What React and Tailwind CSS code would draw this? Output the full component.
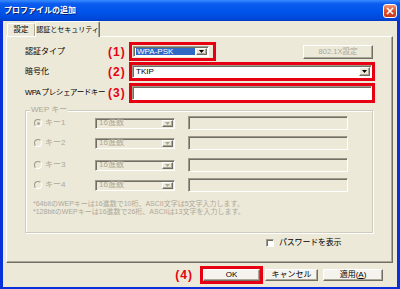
import React from "react";

const sunken =
  "border border-t-[#9D9A8B] border-l-[#9D9A8B] border-b-white border-r-white shadow-[inset_1px_1px_0_#716F64]";
const raised =
  "border border-t-white border-l-white border-b-[#716F64] border-r-[#716F64] shadow-[inset_-1px_-1px_0_#ACA899]";

const Arrow = ({ disabled }) => (
  <div className={`w-[11px] h-full flex items-center justify-center bg-[#ECE9D8] ${raised}`}>
    <svg width="5" height="3" viewBox="0 0 5 3">
      <polygon points="0,0 5,0 2.5,3" fill={disabled ? "#ACA899" : "#000"} />
    </svg>
  </div>
);

const Select = ({ value, className, disabled, highlight }) => (
  <div
    className={`flex items-stretch p-[1px] ${sunken} ${disabled ? "bg-[#ECE9D8]" : "bg-white"} ${className}`}
  >
    <div className="flex-1 flex items-center pl-[1px] pr-[1px]">
      <span
        className={`flex-1 h-full flex items-center pl-[1px] text-[8px] leading-none ${
          highlight ? "bg-[#316AC5] text-white" : disabled ? "text-[#ACA899]" : "text-black"
        }`}
      >
        {value}
      </span>
    </div>
    <Arrow disabled={disabled} />
  </div>
);

const Paren = ({ n }) => (
  <span className="w-[21px] text-[12px] leading-none font-bold tracking-[1px] text-[#E60012]">
    ({n})
  </span>
);

const Radio = ({ checked }) => (
  <div className="w-[8px] h-[8px] rounded-full bg-[#ECE9D8] border border-t-[#9D9A8B] border-l-[#9D9A8B] border-b-white border-r-white flex items-center justify-center">
    {checked && <div className="w-[3px] h-[3px] rounded-full bg-[#ACA899]" />}
  </div>
);

const KeyRow = ({ n, checked, className }) => (
  <div className={`flex items-center h-[14px] pl-[8px] ${className}`}>
    <Radio checked={checked} />
    <span className="ml-[3px] w-[50px] text-[8px] leading-none text-[#ACA899]">キー{n}</span>
    <Select value="16進数" disabled className="w-[80px] h-[11px]" />
    <div className={`ml-[13px] w-[160px] h-[14px] bg-[#ECE9D8] ${sunken}`} />
  </div>
);

export default function App() {
  return (
    <div className="w-[400px] h-[289px] flex flex-col bg-[#0831D9] font-['Liberation_Sans','Noto_Sans_CJK_JP',sans-serif] select-none">
      {/* title bar */}
      <div className="h-[21px] flex items-center pl-[4px] pr-[3px] bg-[linear-gradient(to_bottom,#3A8CFF_0%,#0A5CF0_18%,#0053E8_60%,#0047DA_90%,#003BC5_100%)]">
        <span className="text-[8px] leading-none font-bold text-white [text-shadow:1px_1px_0_#0A1E6E]">
          プロファイルの追加
        </span>
        <div className="ml-auto w-[14px] h-[14px] rounded-[3px] border border-white bg-[linear-gradient(to_bottom,#F09A7A,#E0542E_45%,#C8381A)] flex items-center justify-center">
          <svg width="8" height="8" viewBox="0 0 8 8">
            <path d="M1 1 L7 7 M7 1 L1 7" stroke="#fff" strokeWidth="1.6" />
          </svg>
        </div>
      </div>

      {/* body */}
      <div className="flex-1 mx-[3px] mb-[2px] bg-[#ECE9D8] flex flex-col">
        {/* tabs */}
        <div className="h-[15px] flex items-end pl-[4px]">
          <div className="h-[13px] w-[28px] flex items-center justify-center border-t border-l border-white border-r border-r-[#ACA899] rounded-t-[2px] text-[7.5px] leading-none text-black">
            設定
          </div>
          <div className="relative z-10 -mb-[1px] h-[16px] w-[65px] flex items-center justify-center bg-[#ECE9D8] border-t border-l border-white border-r border-r-[#716F64] rounded-t-[2px] shadow-[inset_-1px_0_0_#ACA899] text-[7px] leading-none text-black">
            認証とセキュリティ
          </div>
        </div>

        {/* panel */}
        <div className="ml-[3px] mr-[4px] h-[227px] flex flex-col pt-[5px] pl-[18px] pr-[17px] border-l border-t border-white border-r border-b border-r-[#716F64] border-b-[#716F64] shadow-[inset_-1px_-1px_0_#ACA899]">
          {/* row 1 */}
          <div className="h-[19px] flex items-center">
            <span className="w-[83px] text-[8px] leading-none text-black">認証タイプ</span>
            <Paren n={1} />
            <div className="w-[87px] h-[19px] border-[3px] border-[#E60012] p-[1px]">
              <Select value="WPA-PSK" highlight className="w-[76px] h-[11px]" />
            </div>
            <div
              className={`ml-auto mr-[2px] w-[70px] h-[14px] flex items-center justify-center text-[7.5px] leading-none text-[#ACA899] ${raised}`}
            >
              802.1X設定
            </div>
          </div>

          {/* row 2 */}
          <div className="mt-[1px] h-[19px] flex items-center">
            <span className="w-[83px] text-[8px] leading-none text-black">暗号化</span>
            <Paren n={2} />
            <div className="flex-1 h-[19px] border-[3px] border-[#E60012]">
              <Select value="TKIP" className="w-full h-[13px]" />
            </div>
          </div>

          {/* row 3 */}
          <div className="mt-[2px] h-[20px] flex items-center">
            <span className="w-[83px] text-[7.5px] leading-none tracking-[-0.4px] text-black whitespace-nowrap">
              WPA プレシェアードキー
            </span>
            <Paren n={3} />
            <div className="flex-1 h-[20px] border-[3px] border-[#E60012] px-[0px]">
              <div className={`w-full h-[14px] bg-white ${sunken}`} />
            </div>
          </div>

          {/* WEP group */}
          <div className="mt-[7px] mr-[2px] h-[123px] flex flex-col border border-[#CFCCBD] shadow-[1px_1px_0_#fff,inset_1px_1px_0_#fff]">
            <span className="self-start -mt-[6px] ml-[4px] px-[1px] bg-[#ECE9D8] text-[8px] leading-[10px] text-[#ACA899]">
              WEP キー
            </span>
            <KeyRow n={1} checked className="mt-[1px]" />
            <KeyRow n={2} className="mt-[6px]" />
            <KeyRow n={3} className="mt-[8px]" />
            <KeyRow n={4} className="mt-[6px]" />
            <div className="mt-[8px] pl-[7px] text-[7px] leading-[8px] text-[#ACA899] whitespace-nowrap">
              <div>*64bitのWEPキーは16進数で10桁、ASCII文字は5文字入力します。</div>
              <div>*128bitのWEPキーは16進数で26桁、ASCIIは13文字を入力します。</div>
            </div>
          </div>

          {/* show password */}
          <div className="mt-[6px] h-[8px] flex items-center ml-[241px]">
            <div className={`w-[8px] h-[8px] bg-white ${sunken}`} />
            <span className="ml-[5px] text-[8px] leading-none tracking-[-0.2px] text-black whitespace-nowrap">
              パスワードを表示
            </span>
          </div>
        </div>

        {/* buttons */}
        <div className="pt-[3px] flex items-center justify-end pr-[14px]">
          <span className="mr-[7px] text-[12px] leading-none font-bold tracking-[1px] text-[#E60012]">
            (4)
          </span>
          <div className="w-[63px] h-[18px] border-[3px] border-[#E60012]">
            <div
              className={`w-full h-full flex items-center justify-center bg-[#F4F3EE] text-[8px] leading-none text-black ${raised}`}
            >
              OK
            </div>
          </div>
          <div
            className={`ml-[2px] w-[53px] h-[12px] flex items-center justify-center bg-[#F4F3EE] text-[8px] leading-none text-black ${raised}`}
          >
            キャンセル
          </div>
          <div
            className={`ml-[5px] w-[60px] h-[12px] flex items-center justify-center bg-[#F4F3EE] text-[8px] leading-none text-black ${raised}`}
          >
            適用(<span className="underline">A</span>)
          </div>
        </div>
      </div>
    </div>
  );
}
